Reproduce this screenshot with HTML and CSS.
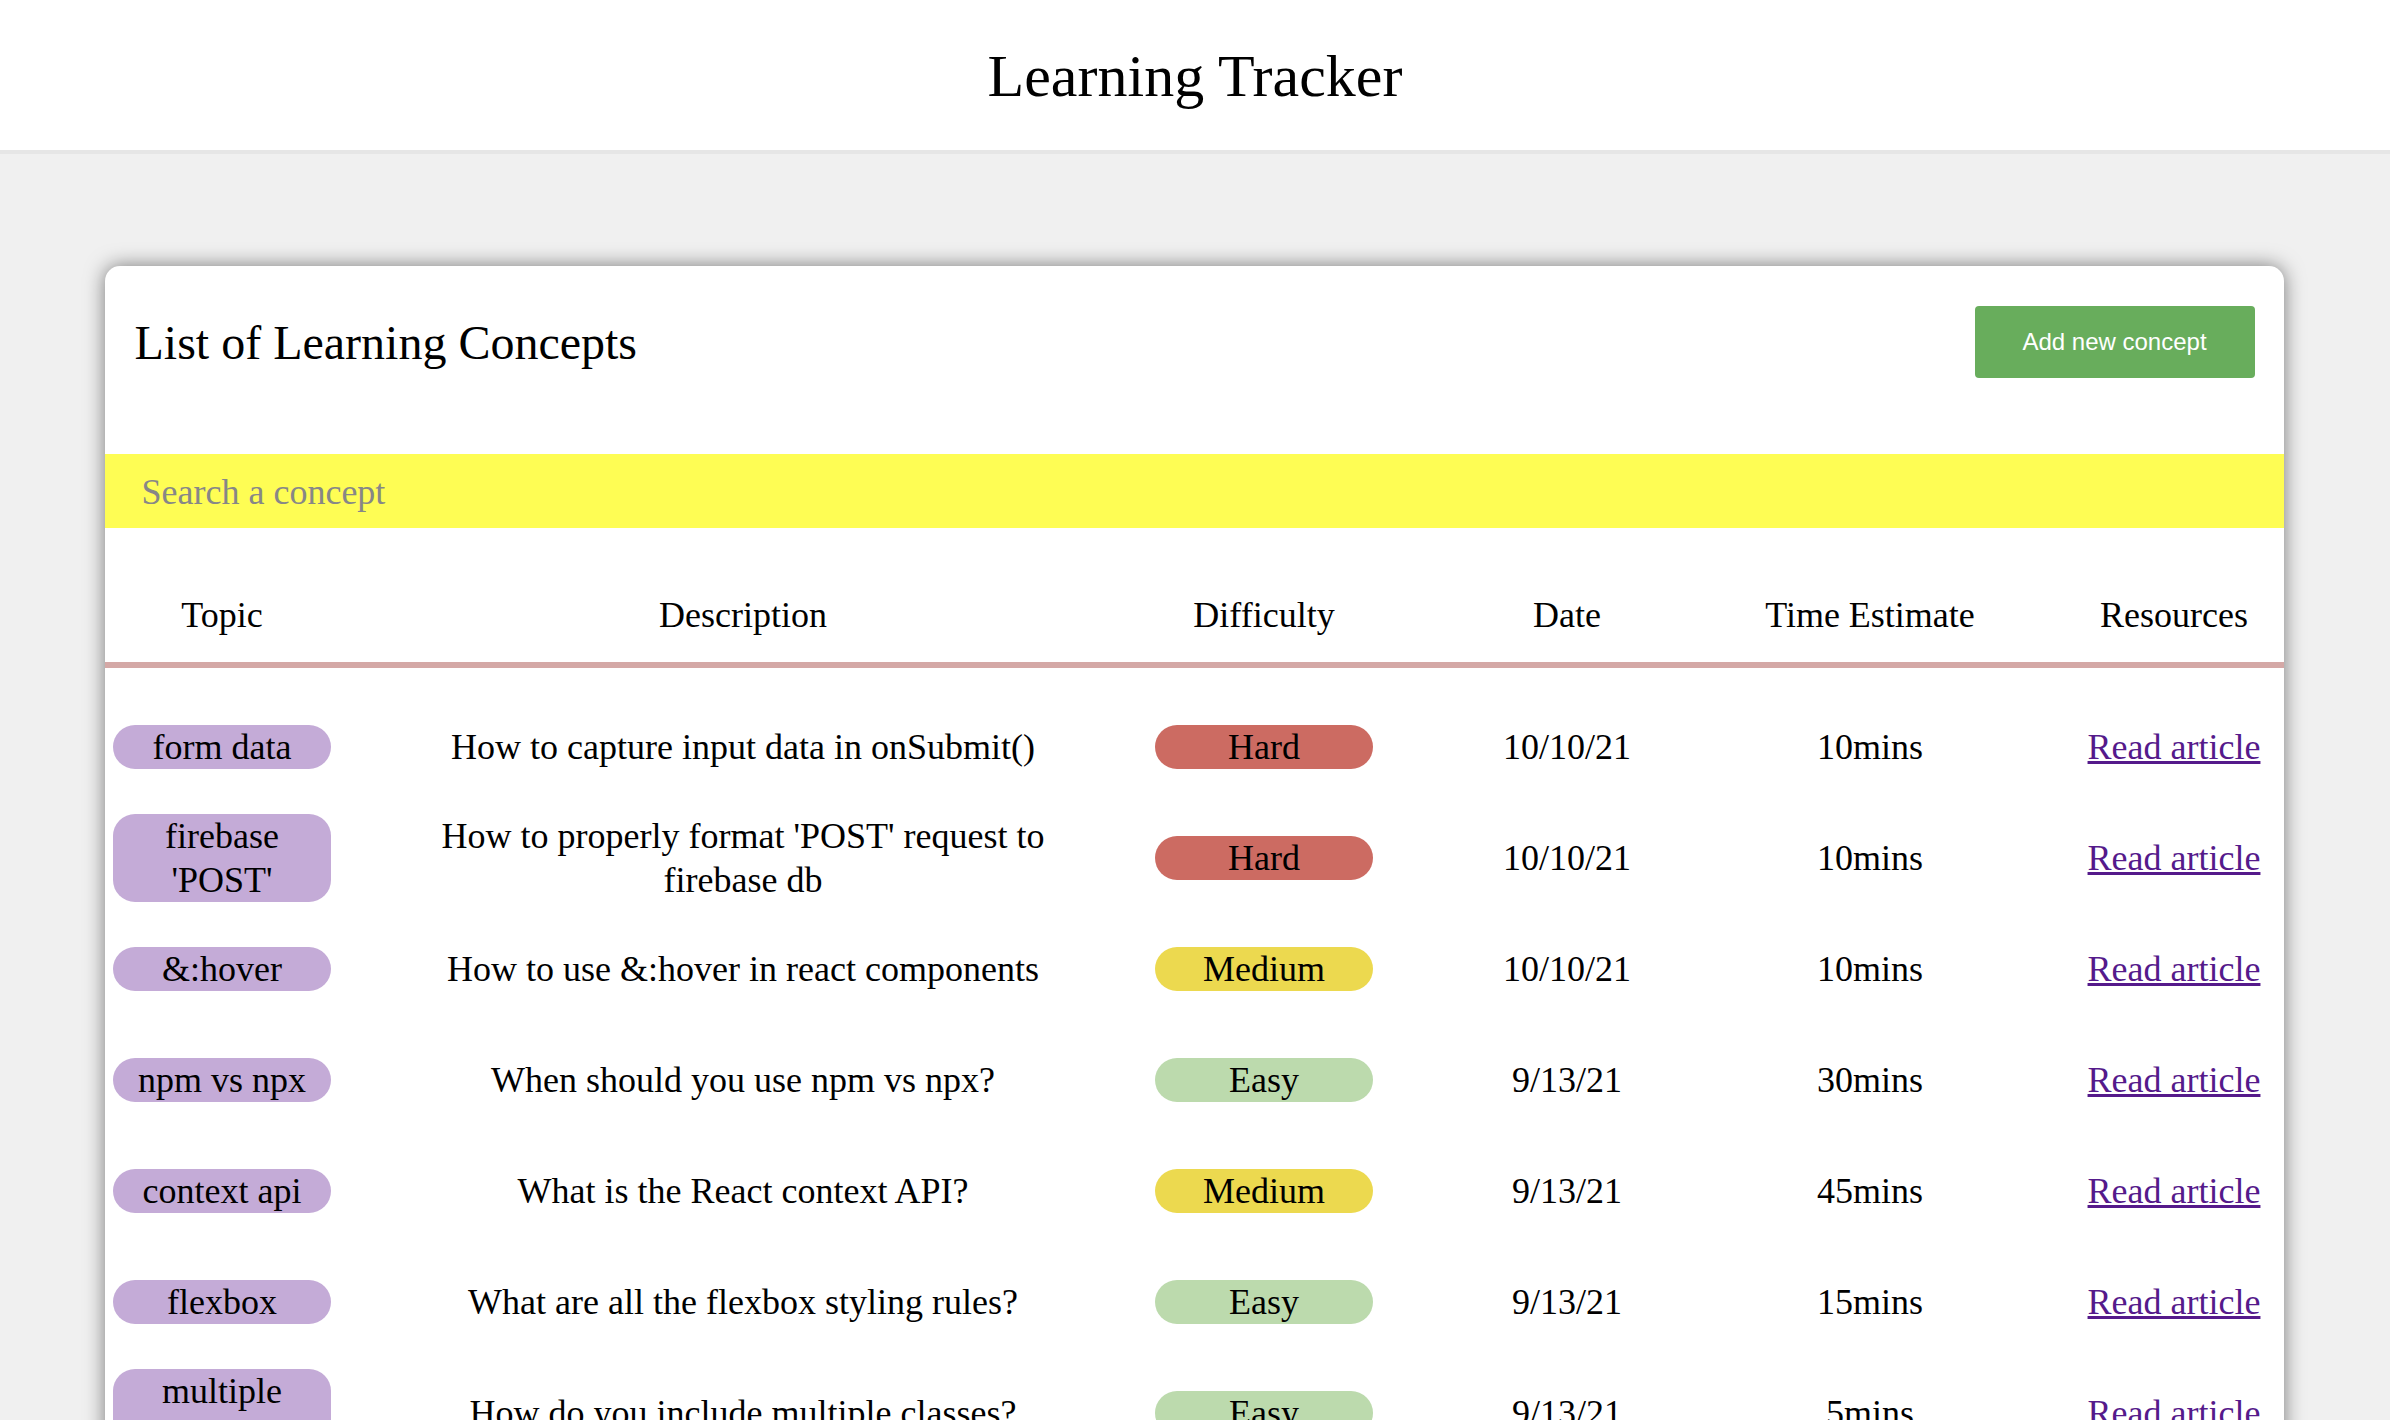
FILE: index.html
```html
<!DOCTYPE html>
<html lang="en">
<head>
<meta charset="utf-8">
<title>Learning Tracker</title>
<link rel="stylesheet" href="styles.css">
</head>
<body>
<header class="app-header">
  <h1 class="app-title">Learning Tracker</h1>
</header>
<main class="page">
  <section class="card">
    <div class="card-head">
      <h2 class="card-title">List of Learning Concepts</h2>
      <button class="add-btn" type="button">Add new concept</button>
    </div>
    <input class="search" type="text" placeholder="Search a concept">
    <div class="table">
      <div class="row head-row">
        <div class="cell">Topic</div>
        <div class="cell">Description</div>
        <div class="cell">Difficulty</div>
        <div class="cell">Date</div>
        <div class="cell">Time Estimate</div>
        <div class="cell">Resources</div>
      </div>
      <div class="body">
        <div class="row">
          <div class="cell"><span class="pill topic">form data</span></div>
          <div class="cell">How to capture input data in onSubmit()</div>
          <div class="cell"><span class="pill hard">Hard</span></div>
          <div class="cell">10/10/21</div>
          <div class="cell">10mins</div>
          <div class="cell"><a class="link" href="#">Read article</a></div>
        </div>
        <div class="row">
          <div class="cell"><span class="pill topic">firebase 'POST'</span></div>
          <div class="cell">How to properly format 'POST' request to firebase db</div>
          <div class="cell"><span class="pill hard">Hard</span></div>
          <div class="cell">10/10/21</div>
          <div class="cell">10mins</div>
          <div class="cell"><a class="link" href="#">Read article</a></div>
        </div>
        <div class="row">
          <div class="cell"><span class="pill topic">&amp;:hover</span></div>
          <div class="cell">How to use &amp;:hover in react components</div>
          <div class="cell"><span class="pill medium">Medium</span></div>
          <div class="cell">10/10/21</div>
          <div class="cell">10mins</div>
          <div class="cell"><a class="link" href="#">Read article</a></div>
        </div>
        <div class="row">
          <div class="cell"><span class="pill topic">npm vs npx</span></div>
          <div class="cell">When should you use npm vs npx?</div>
          <div class="cell"><span class="pill easy">Easy</span></div>
          <div class="cell">9/13/21</div>
          <div class="cell">30mins</div>
          <div class="cell"><a class="link" href="#">Read article</a></div>
        </div>
        <div class="row">
          <div class="cell"><span class="pill topic">context api</span></div>
          <div class="cell">What is the React context API?</div>
          <div class="cell"><span class="pill medium">Medium</span></div>
          <div class="cell">9/13/21</div>
          <div class="cell">45mins</div>
          <div class="cell"><a class="link" href="#">Read article</a></div>
        </div>
        <div class="row">
          <div class="cell"><span class="pill topic">flexbox</span></div>
          <div class="cell">What are all the flexbox styling rules?</div>
          <div class="cell"><span class="pill easy">Easy</span></div>
          <div class="cell">9/13/21</div>
          <div class="cell">15mins</div>
          <div class="cell"><a class="link" href="#">Read article</a></div>
        </div>
        <div class="row">
          <div class="cell"><span class="pill topic">multiple classes</span></div>
          <div class="cell">How do you include multiple classes?</div>
          <div class="cell"><span class="pill easy">Easy</span></div>
          <div class="cell">9/13/21</div>
          <div class="cell">5mins</div>
          <div class="cell"><a class="link" href="#">Read article</a></div>
        </div>
      </div>
    </div>
  </section>
</main>
</body>
</html>
```

FILE: styles.css
```css
html, body {
  margin: 0;
  padding: 0;
}
body {
  background: #f0f0f0;
  font-family: "Liberation Serif", "Times New Roman", serif;
  color: #000;
  height: 1420px;
  overflow: hidden;
}
.app-header {
  background: #fff;
  height: 150px;
  border-bottom: 4px solid #e6e6e6;
  display: flex;
  align-items: center;
  justify-content: center;
}
.app-title {
  margin: 0;
  font-size: 60px;
  font-weight: normal;
  line-height: 68px;
  padding-top: 1px;
}
.page {
  padding-top: 112px;
  display: flex;
  justify-content: center;
}
.card {
  width: 2179px;
  background: #fff;
  border-radius: 15px;
  box-shadow: 0 0 20px rgba(0, 0, 0, 0.5);
  margin-left: -2px;
}
.card-head {
  display: flex;
  justify-content: space-between;
  align-items: center;
  padding: 40px 29px 76px 30px;
}
.card-title {
  margin: 0;
  font-size: 48px;
  font-weight: normal;
  line-height: 56px;
  padding-top: 2px;
}
.add-btn {
  width: 280px;
  height: 72px;
  border: none;
  border-radius: 4px;
  background: #68ad5c;
  color: #fff;
  font-family: "Liberation Sans", Arial, sans-serif;
  font-size: 24px;
  padding: 0;
}
.search {
  display: block;
  box-sizing: border-box;
  width: 100%;
  height: 74px;
  border: none;
  outline: none;
  margin: 0;
  padding: 2px 37px 0;
  background: #fefd54;
  font-family: "Liberation Serif", "Times New Roman", serif;
  font-size: 36px;
  color: #000;
}
.search::placeholder {
  color: #878787;
}
.table {
  font-size: 36px;
  line-height: 44px;
}
.row {
  display: grid;
  grid-template-columns: 229px 665px 229px 229px 229px 1fr;
  column-gap: 74px;
  padding-left: 3px;
  align-items: center;
  min-height: 111px;
}
.head-row {
  min-height: 0;
  padding-top: 65px;
  padding-bottom: 25px;
  border-bottom: 6px solid #d4a8a6;
}
.body {
  padding-top: 23px;
}
.cell {
  text-align: center;
  display: flex;
  justify-content: center;
  align-items: center;
}
.row .cell:last-child {
  padding-left: 6px;
}
.pill {
  display: block;
  width: 218px;
  box-sizing: border-box;
  padding: 0 10px;
  border-radius: 22px;
  text-align: center;
}
.topic { background: #c4abd7; }
.hard { background: #cc6b62; }
.medium { background: #ecd94f; }
.easy { background: #bcdaad; }
.link {
  color: #551a8b;
  text-decoration: underline;
}
```
